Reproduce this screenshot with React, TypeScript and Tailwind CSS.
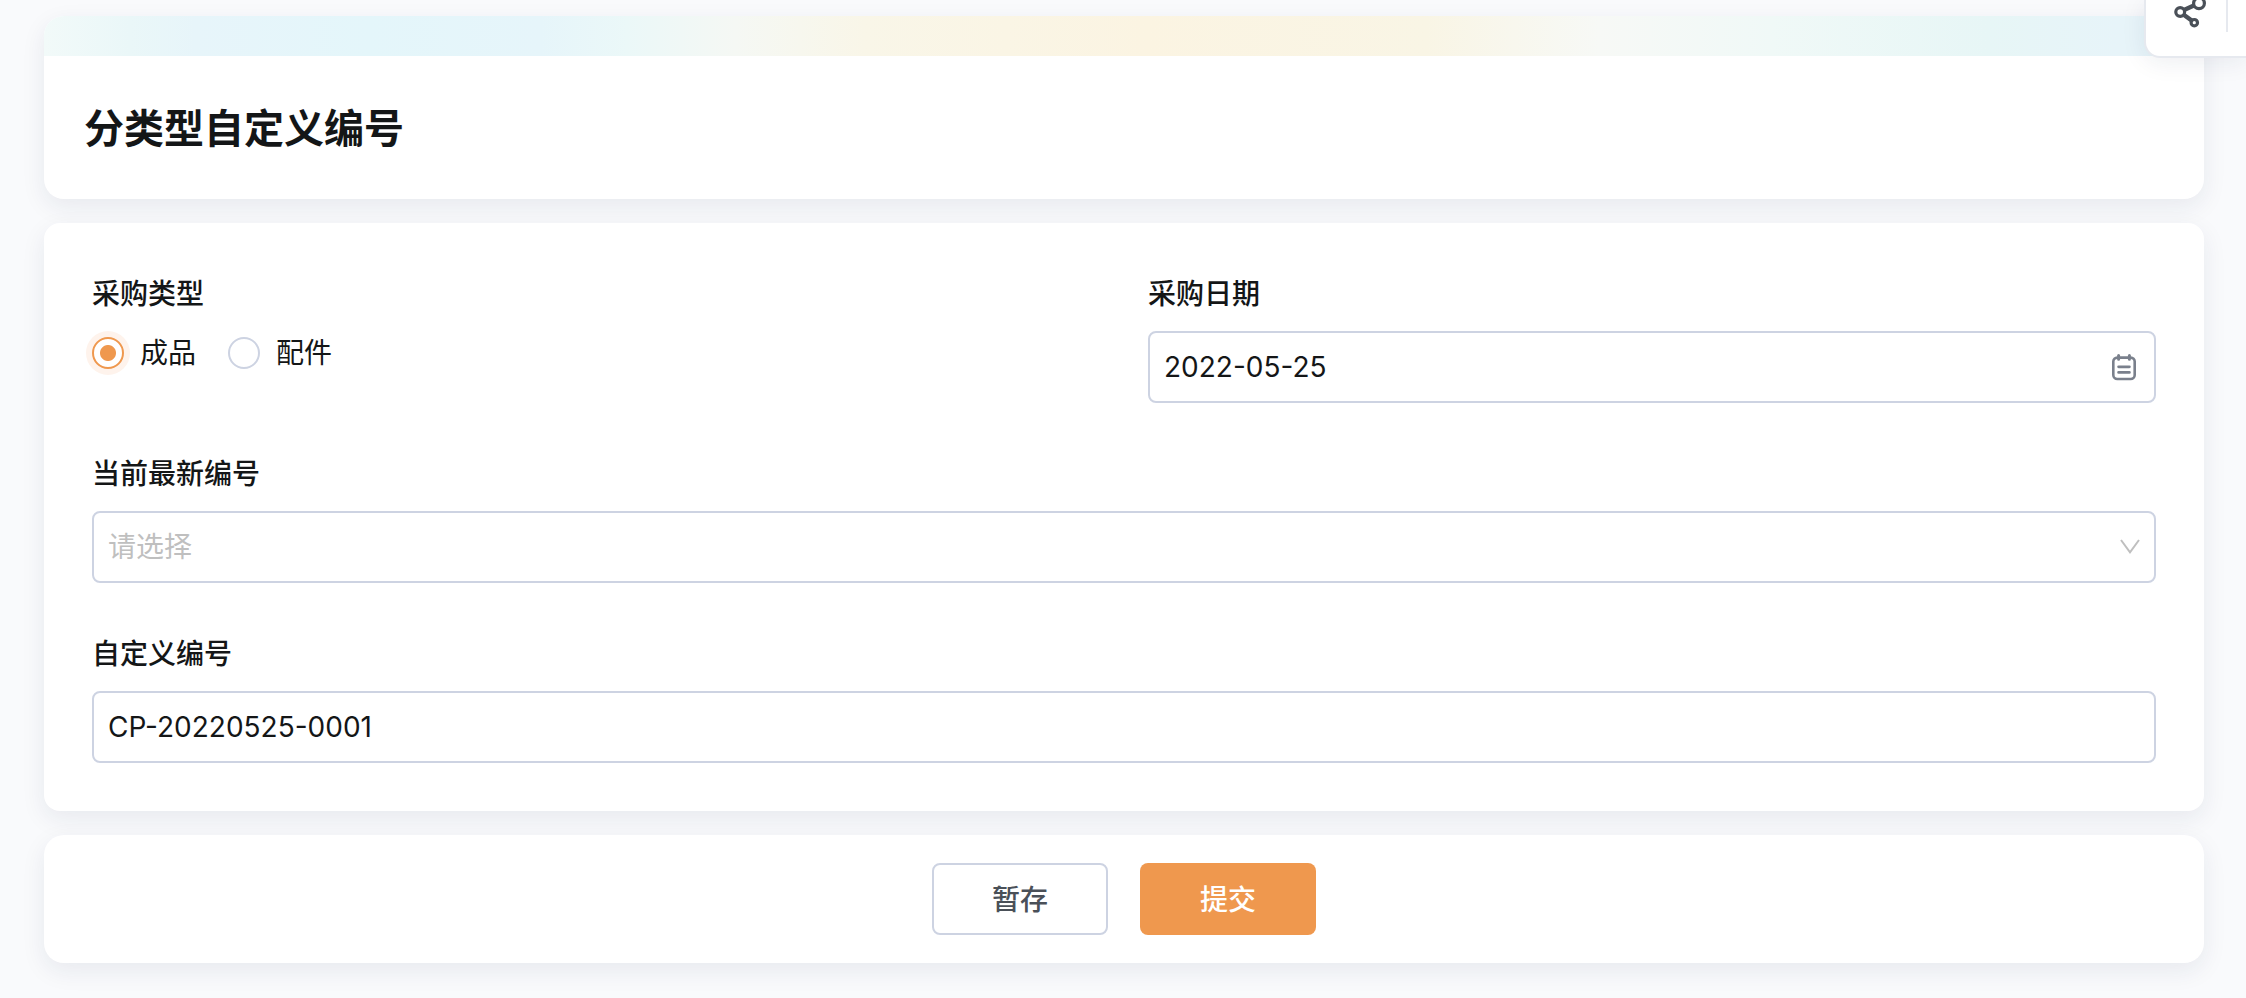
import React, { useState } from "react";

const CARD = "bg-white shadow-[0_8px_24px_rgba(30,34,80,0.08)]";
const LABEL = "block text-[28px] leading-[46px] font-medium";
const FIELD =
  "block w-full h-[72px] rounded-lg border-2 border-[#cdd3e2] bg-white px-3.5 text-[28px] outline-none focus:border-[#ef984e]";

const ShareIcon = () => (
  <svg width="36" height="32" viewBox="0 0 36 32" fill="none" stroke="#4a5058" strokeWidth="3.2">
    <circle cx="8.2" cy="12" r="4.4" />
    <circle cx="27" cy="3.2" r="5.4" />
    <circle cx="22.3" cy="22.7" r="3.2" />
    <path d="M12 10 22.4 5.2M11.4 14.4 20 20.8" strokeWidth="4.4" />
  </svg>
);

const CalendarIcon = () => (
  <svg width="28" height="28" viewBox="0 0 28 28" fill="none" stroke="#7a808c" strokeWidth="2.6" strokeLinecap="round">
    <rect x="3.3" y="4.6" width="21.4" height="21.4" rx="4" />
    <path d="M8.6 2.6v3.6M19.4 2.6v3.6" strokeWidth="3" />
    <path d="M8.6 13.8h10.8M8.6 19.4h10.8" strokeWidth="2.8" />
  </svg>
);

const ArrowIcon = () => (
  <svg width="20" height="16" viewBox="0 0 20 16" fill="none" stroke="#bfbfbf" strokeWidth="2">
    <path d="M1 1 10 13.4l9-12.4" />
  </svg>
);

interface IRadioProps {
  value: string;
  current: string;
  onSelect: (value: string) => void;
}

const TypeRadio = ({ value, current, onSelect }: IRadioProps) => {
  return (
    <label className="flex h-11 items-center gap-4 text-[28px] leading-[46px]">
      <input
        type="radio"
        name="purchaseType"
        value={value}
        checked={current === value}
        onChange={() => onSelect(value)}
        className="size-8 appearance-none rounded-full border-2 border-[#cdd3e2] bg-white checked:border-[#ef984e] checked:bg-[radial-gradient(circle,#ef984e_7.5px,#fff_8.5px)] checked:shadow-[0_0_0_6px_#fef3ec]"
      />
      {value}
    </label>
  );
};

const App = () => {
  const [purchaseType, setPurchaseType] = useState<string>("成品");
  const [date, setDate] = useState<string>("2022-05-25");
  const [latest, setLatest] = useState<string>("");
  const [code, setCode] = useState<string>("CP-20220525-0001");

  return (
    <div className="relative min-h-screen overflow-hidden bg-[#f9fafc] pt-4 pr-[42px] pb-[35px] pl-11 font-[Inter,'Noto_Sans_CJK_SC',sans-serif] text-[#141617]">
      {/* Floating share toolbar */}
      <div className="absolute top-0 right-0 z-10 flex h-[58px] w-[102px] items-start rounded-bl-2xl border-b-2 border-l-2 border-[#e6e9ef] bg-white shadow-[0_4px_24px_rgba(30,34,80,0.08)]">
        <button type="button" aria-label="分享" className="flex h-8 flex-1 items-start border-r-2 border-[#e6e9ef] pl-[26px]">
          <ShareIcon />
        </button>
        <div className="w-[18px]" />
      </div>

      <main className="flex flex-col gap-6">
        {/* Title */}
        <header className={`overflow-hidden rounded-[20px] ${CARD}`}>
          <div className="h-10 bg-[linear-gradient(90deg,#f2faf9_0%,#eaf7f8_4%,#e7f5fa_7%,#e4f6fa_15%,#e6f5fa_23%,#ebf8f8_27%,#f5f8f4_32%,#f9f6e8_38%,#fbf4e2_51%,#f9f5e5_64%,#f7f9f6_72%,#f0f9f7_80%,#e7f6f6_90%,#e7f4f9_96%)]" />
          <h1 className="px-10 pt-11 pb-[42px] text-[40px] leading-[57px] font-bold">分类型自定义编号</h1>
        </header>

        {/* Form */}
        <form id="purchase" className={`grid grid-cols-2 gap-12 rounded-2xl p-12 ${CARD}`}>
          <fieldset>
            <legend className={LABEL}>采购类型</legend>
            <div className="mt-3.5 flex gap-8">
              <TypeRadio value="成品" current={purchaseType} onSelect={setPurchaseType} />
              <TypeRadio value="配件" current={purchaseType} onSelect={setPurchaseType} />
            </div>
          </fieldset>
          <div>
            <label htmlFor="date" className={LABEL}>采购日期</label>
            <div className="relative mt-3.5">
              <input id="date" type="text" className={FIELD} value={date} onChange={(e) => setDate(e.target.value)} />
              <span className="pointer-events-none absolute inset-y-0 right-[18px] flex items-center">
                <CalendarIcon />
              </span>
            </div>
          </div>
          <div className="col-span-2">
            <label htmlFor="latest" className={LABEL}>当前最新编号</label>
            <div className="relative mt-3.5">
              <select
                id="latest"
                className={`${FIELD} appearance-none ${latest ? "" : "text-[#bfbfbf]"}`}
                value={latest}
                onChange={(e) => setLatest(e.target.value)}
              >
                <option value="">请选择</option>
              </select>
              <span className="pointer-events-none absolute inset-y-0 right-4 flex items-center">
                <ArrowIcon />
              </span>
            </div>
          </div>
          <div className="col-span-2">
            <label htmlFor="code" className={LABEL}>自定义编号</label>
            <div className="mt-3.5">
              <input id="code" type="text" className={FIELD} value={code} onChange={(e) => setCode(e.target.value)} />
            </div>
          </div>
        </form>

        {/* Actions */}
        <footer className={`flex justify-center gap-8 rounded-[20px] p-7 ${CARD}`}>
          <button type="button" className="h-[72px] w-44 rounded-lg border-2 border-[#cdd3e2] bg-white pt-0.5 text-[28px] font-medium text-[#4a5058]">
            暂存
          </button>
          <button type="submit" form="purchase" className="h-[72px] w-44 rounded-lg bg-[#ef984e] pt-0.5 text-[28px] font-medium text-white">
            提交
          </button>
        </footer>
      </main>
    </div>
  );
};

export default App;
